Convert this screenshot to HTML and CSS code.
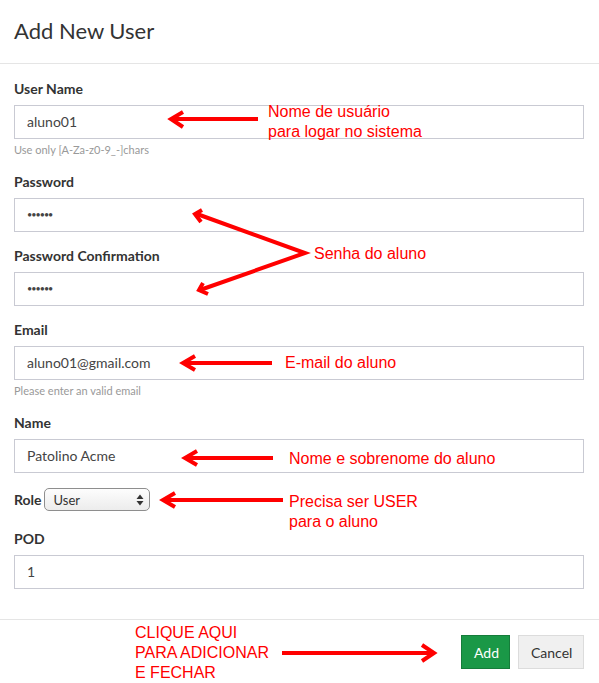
FILE: index.html
```html
<!DOCTYPE html>
<html>
<head>
<meta charset="utf-8">
<link rel="stylesheet" href="styles.css">
</head>
<body>
<div class="modal">
  <div class="modal-header">
    <h1 class="title">Add New User</h1>
  </div>
  <div class="modal-body">
    <div class="group">
      <label class="label">User Name</label>
      <div class="input">aluno01</div>
      <div class="help">Use only [A-Za-z0-9_-]chars</div>
    </div>
    <div class="group">
      <label class="label">Password</label>
      <div class="input dots">••••••</div>
    </div>
    <div class="group">
      <label class="label">Password Confirmation</label>
      <div class="input dots">••••••</div>
    </div>
    <div class="group">
      <label class="label">Email</label>
      <div class="input">aluno01@gmail.com</div>
      <div class="help">Please enter an valid email</div>
    </div>
    <div class="group">
      <label class="label">Name</label>
      <div class="input">Patolino Acme</div>
    </div>
    <div class="group role">
      <label class="label inline">Role</label>
      <div class="select">
        <span>User</span>
        <svg width="8" height="12" viewBox="0 0 8 12"><path d="M4 0.5 L7.5 5 L0.5 5 Z M4 11.5 L7.5 7 L0.5 7 Z" fill="#333"/></svg>
      </div>
    </div>
    <div class="group">
      <label class="label">POD</label>
      <div class="input">1</div>
    </div>
  </div>
  <div class="modal-footer">
    <button class="btn btn-add">Add</button>
    <button class="btn btn-cancel">Cancel</button>
  </div>

  <svg class="arrows" width="599" height="683" viewBox="0 0 599 683">
    <g fill="none" stroke="#ff0000" stroke-width="4" stroke-linejoin="miter" stroke-linecap="butt">
      <line x1="258" y1="119" x2="172" y2="119"/>
      <polyline points="183,112 171,119 183,127"/>

      <polyline points="197,214 305,253 200,290"/>
      <polyline points="202,210 195,214 201,222"/>
      <polyline points="203,283 199,290 208,294"/>

      <line x1="272" y1="363" x2="185" y2="363"/>
      <polyline points="195,356 183,363 195,370"/>

      <line x1="273" y1="458" x2="187" y2="458"/>
      <polyline points="197,451 185,458 197,465"/>

      <line x1="283" y1="500" x2="165" y2="500"/>
      <polyline points="175,493 163,500 175,507"/>

      <line x1="282" y1="653" x2="432" y2="653"/>
      <polyline points="422,645 434,653 422,661"/>
    </g>
  </svg>
  <div class="note n1">Nome de usuário<br>para logar no sistema</div>
  <div class="note n2">Senha do aluno</div>
  <div class="note n3">E-mail do aluno</div>
  <div class="note n4">Nome e sobrenome do aluno</div>
  <div class="note n5">Precisa ser USER<br>para o aluno</div>
  <div class="note n6">CLIQUE AQUI<br>PARA ADICIONAR<br>E FECHAR</div>
</div>
</body>
</html>
```

FILE: styles.css
```css
* { box-sizing: border-box; }
html, body { margin: 0; padding: 0; background: #fff; }
body {
  font-family: "Lato", "Noto Sans", sans-serif;
  color: #333;
  width: 599px;
  height: 683px;
  overflow: hidden;
}
.modal { position: relative; width: 599px; height: 683px; }
.modal-header {
  height: 64px;
  border-bottom: 1px solid #e5e5e5;
  padding: 0 14px;
  display: flex;
  align-items: center;
}
.title {
  margin: 0;
  font-size: 22px;
  font-weight: 400;
  color: #333;
  position: relative;
  top: -1px;
}
.modal-body {
  padding: 16px 15px 0 14px;
  height: 556px;
  border-bottom: 1px solid #e5e5e5;
}
.group { margin-bottom: 15px; }
.label {
  display: block;
  font-size: 14px;
  font-weight: 700;
  line-height: 18px;
  margin-bottom: 7px;
  color: #333;
}
.input {
  height: 34px;
  border: 1px solid #c9cad3;
  padding: 0 12px;
  font-size: 14px;
  line-height: 32px;
  color: #444;
}
.input.dots { font-size: 9px; letter-spacing: -1px; color: #444; }
.help {
  font-size: 11px;
  line-height: 16px;
  margin-top: 3px;
  color: #999;
}
.role {
  display: flex;
  align-items: center;
  gap: 2px;
  margin-bottom: 19px;
}
.label.inline { display: inline-block; margin: 0; }
.select {
  width: 106px;
  height: 23px;
  border: 1px solid #8e8e8e;
  border-radius: 5px;
  background: linear-gradient(#fdfdfd, #ececec);
  display: flex;
  align-items: center;
  justify-content: space-between;
  padding: 0 5px 0 9px;
  font-size: 13px;
  color: #333;
}
.modal-footer {
  display: flex;
  justify-content: flex-end;
  gap: 8px;
  padding: 15px 15px 0 0;
}
.btn {
  height: 34px;
  font-family: inherit;
  font-size: 14px;
  border-radius: 0;
  padding: 0 12px;
  cursor: pointer;
}
.btn-add {
  width: 49px;
  background: #1a9847;
  border: 1px solid #157c3a;
  color: #fff;
}
.btn-cancel {
  width: 66px;
  background: #f0f0f0;
  border: 1px solid #dcdcdc;
  color: #333;
}
.arrows { position: absolute; left: 0; top: 0; pointer-events: none; }
.note {
  position: absolute;
  font-family: "Liberation Sans", Arial, sans-serif;
  font-size: 16px;
  line-height: 20px;
  color: #ff0000;
  white-space: nowrap;
}
.n1 { left: 268px; top: 102px; }
.n2 { left: 314px; top: 244px; }
.n3 { left: 285px; top: 353px; }
.n4 { left: 289px; top: 449px; }
.n5 { left: 289px; top: 492px; }
.n6 { left: 135px; top: 623px; }
```
